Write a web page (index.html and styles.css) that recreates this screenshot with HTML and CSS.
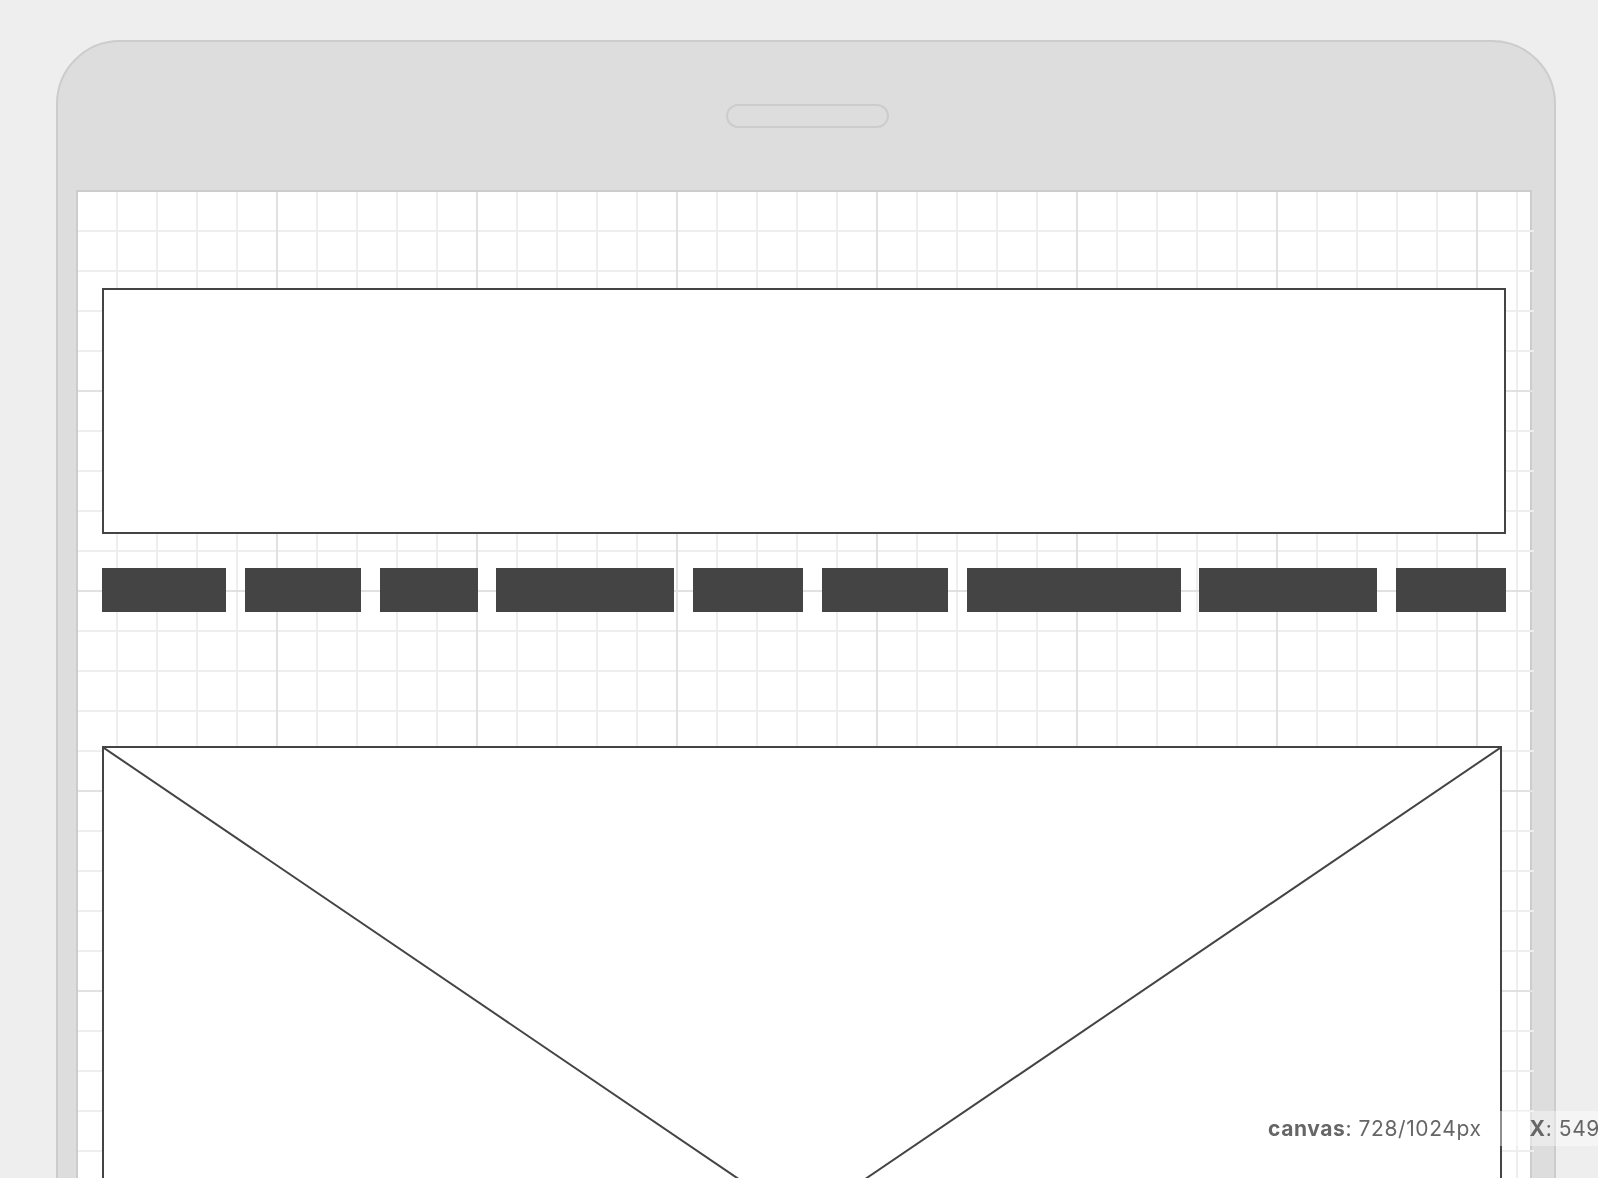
FILE: index.html
```html
<!DOCTYPE html>
<html lang="en">
<head>
<meta charset="utf-8">
<title>Wireframe canvas</title>
<link rel="stylesheet" href="styles.css">
</head>
<body>
<div class="page">
  <div class="device">
    <div class="device-top">
      <div class="speaker"></div>
    </div>
    <div class="screen">
      <div class="canvas">
        <div class="header-box"></div>
        <div class="nav">
          <div class="nav-item w1"></div>
          <div class="nav-item w2"></div>
          <div class="nav-item w3"></div>
          <div class="nav-item w4"></div>
          <div class="nav-item w5"></div>
          <div class="nav-item w6"></div>
          <div class="nav-item w7"></div>
          <div class="nav-item w8"></div>
          <div class="nav-item w9"></div>
        </div>
        <div class="hero">
          <svg class="hero-cross" width="100%" height="100%">
            <line x1="0" y1="0" x2="100%" y2="100%"></line>
            <line x1="100%" y1="0" x2="0" y2="100%"></line>
          </svg>
        </div>
      </div>
    </div>
  </div>
</div>
<div class="status">
  <div class="status-item"><b>canvas</b>: 728/1024px</div>
  <div class="status-item status-coord"><b>X</b>: 549</div>
</div>
</body>
</html>
```

FILE: styles.css
```css
html, body {
  margin: 0;
  padding: 0;
  overflow: hidden;
  background: #eeeeee;
}

.page {
  padding: 40px 0 0 56px;
}

.device {
  box-sizing: border-box;
  width: 1500px;
  background: #dddddd;
  border: 2px solid #cccccc;
  border-radius: 64px 64px 0 0;
  padding: 0 22px 40px 18px;
}

.device-top {
  height: 148px;
  display: flex;
  align-items: flex-start;
}

.speaker {
  box-sizing: border-box;
  margin: 62px 0 0 650px;
  width: 163px;
  height: 24px;
  border: 2px solid #cccccc;
  border-radius: 12px;
  background: #dddddd;
}

.screen {
  box-sizing: border-box;
  width: 1456px;
  height: 2048px;
  border: 2px solid #cccccc;
  background: #ffffff;
}

.canvas {
  box-sizing: border-box;
  width: 1456px;
  height: 2044px;
  padding: 96px 0 0 24px;
  background-image:
    linear-gradient(to right, transparent 198px, #e1e1e1 198px),
    linear-gradient(to bottom, transparent 198px, #e1e1e1 198px),
    linear-gradient(to right, transparent 38px, #eeeeee 38px),
    linear-gradient(to bottom, transparent 38px, #eeeeee 38px);
  background-size: 200px 200px, 200px 200px, 40px 40px, 40px 40px;
}

.header-box {
  box-sizing: border-box;
  width: 1404px;
  height: 246px;
  border: 2px solid #444444;
  background: #ffffff;
}

.nav {
  width: 1404px;
  height: 44px;
  margin-top: 34px;
  display: flex;
  justify-content: space-between;
}

.nav-item {
  height: 44px;
  background: #444444;
}

.w1 { width: 124px; }
.w2 { width: 116px; }
.w3 { width: 98px; }
.w4 { width: 178px; }
.w5 { width: 110px; }
.w6 { width: 126px; }
.w7 { width: 214px; }
.w8 { width: 178px; }
.w9 { width: 110px; }

.hero {
  position: relative;
  box-sizing: border-box;
  width: 1400px;
  height: 952px;
  margin-top: 134px;
  border: 2px solid #444444;
  background: #ffffff;
}

.hero-cross {
  position: absolute;
  left: 0;
  top: 0;
  display: block;
}

.hero-cross line {
  stroke: #444444;
  stroke-width: 2;
}

.status {
  position: fixed;
  top: 1111px;
  left: 1248px;
  right: 0;
  height: 35px;
  display: flex;
  align-items: center;
  overflow: hidden;
  white-space: nowrap;
  background: rgba(255, 255, 255, 0.4);
  font-family: Inter, "Liberation Sans", sans-serif;
  font-size: 21px;
  letter-spacing: 0.6px;
  color: #666666;
}

.status-item {
  padding: 0 20px;
  flex: none;
}

.status-item b {
  font-weight: 700;
}

.status-coord {
  padding-left: 28px;
}
```
